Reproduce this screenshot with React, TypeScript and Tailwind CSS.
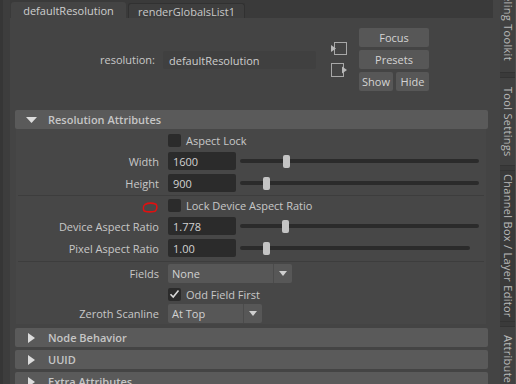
import React from "react";

const LABEL = "text-[#c8c8c8]";

function Field({ value }: { value: string }) {
  return (
    <div className="flex h-[18px] w-[68px] items-center rounded-[2px] bg-[#2b2b2b] pl-[5px] text-[#d2d2d2]">
      {value}
    </div>
  );
}

function Slider({ handle, right }: { handle: number; right: number }) {
  return (
    <div className="relative ml-[4px] flex h-[13px] flex-1 items-center" style={{ marginRight: right }}>
      <div className="h-[4px] w-full rounded-full bg-[#2b2b2b]" />
      <div className="absolute top-0 h-[13px] w-[7px] rounded-[2px] bg-[#c4c4c4]" style={{ left: handle }} />
    </div>
  );
}

function Checkbox({ checked }: { checked?: boolean }) {
  return (
    <div className="flex h-[13px] w-[13px] items-center justify-center rounded-[2px] bg-[#2b2b2b]">
      {checked ? (
        <svg width="11" height="10" viewBox="0 0 11 10">
          <path d="M1.5 5.2 L4.2 8 L9.5 1.5" fill="none" stroke="#d8d8d8" strokeWidth="1.6" />
        </svg>
      ) : null}
    </div>
  );
}

function Dropdown({ value, width }: { value: string; width: number }) {
  return (
    <div className="flex h-[19px] rounded-[2px] bg-[#575757]" style={{ width }}>
      <div className="flex flex-1 items-center pl-[4px] text-[#d2d2d2]">{value}</div>
      <div className="flex w-[19px] items-center justify-center border-l border-[#4b4b4b]">
        <svg width="8" height="5" viewBox="0 0 8 5">
          <path d="M0 0 H8 L4 5 Z" fill="#cfcfcf" />
        </svg>
      </div>
    </div>
  );
}

function Row({ label, h, children }: { label?: React.ReactNode; h: number; children: React.ReactNode }) {
  return (
    <div className="flex items-center" style={{ height: h }}>
      <div className={`flex w-[143px] shrink-0 items-center justify-end ${LABEL}`}>{label}</div>
      <div className="ml-[9px] flex flex-1 items-center">{children}</div>
    </div>
  );
}

function Header({ title, open }: { title: string; open?: boolean }) {
  return (
    <div className="flex h-[19px] shrink-0 items-center rounded-[2px] bg-[#5a5a5a]">
      <div className="flex w-[33px] justify-center">
        {open ? (
          <svg width="11" height="6" viewBox="0 0 11 6">
            <path d="M0 0 H11 L5.5 6 Z" fill="#dcdcdc" />
          </svg>
        ) : (
          <svg width="7" height="10" viewBox="0 0 7 10">
            <path d="M0 0 L7 5 L0 10 Z" fill="#dcdcdc" />
          </svg>
        )}
      </div>
      <span className="font-semibold text-[#c6c6c6]">{title}</span>
    </div>
  );
}

function Btn({ label, w }: { label: string; w: number }) {
  return (
    <div className="flex h-[19px] items-center justify-center rounded-[2px] bg-[#575757] text-[#d4d4d4]" style={{ width: w }}>
      {label}
    </div>
  );
}

function VTab({ h, text, align, dark }: { h: number; text: string; align: string; dark?: boolean }) {
  return (
    <div
      className={`flex shrink-0 overflow-hidden border-y border-[#333] ${align} ${dark ? "bg-[#3a3a3a]" : "bg-[#414141]"}`}
      style={{ height: h }}
    >
      <span className="whitespace-nowrap pl-[1px] text-[11px] leading-[15px] tracking-[0.3px] text-[#b8b8b8] [writing-mode:vertical-rl]">
        {text}
      </span>
    </div>
  );
}

export default function App() {
  return (
    <div className="flex h-[384px] w-[516px] overflow-hidden bg-[#444444] font-['Open_Sans','Noto_Sans',sans-serif] text-[11px] leading-none">
      <div className="w-[10px] shrink-0 border-l-[3px] border-[#363636] bg-[#3d3d3d]" />

      <div className="flex w-[483px] shrink-0 flex-col">
        <div className="flex h-[18px] shrink-0 items-end bg-[#3a3a3a] pl-[1px]">
          <div className="flex h-[16px] w-[115px] items-center justify-center rounded-t-[3px] bg-[#444444] text-[#cfcfcf]">
            defaultResolution
          </div>
          <div className="ml-[2px] flex h-[15px] w-[117px] items-center justify-center rounded-t-[3px] border border-b-0 border-[#313131] bg-[#3e3e3e] text-[#c8c8c8]">
            renderGlobalsList1
          </div>
        </div>

        <div className="flex flex-1 flex-col px-[5px]">
          <div className="-ml-[5px] flex items-center pb-[19px] pt-[10px]">
            <div className={`w-[145px] text-right ${LABEL}`}>resolution:</div>
            <div className="ml-[8px] mt-[1px] flex h-[18px] w-[153px] items-center rounded-[2px] bg-[#404040] pl-[6px] text-[#cdcdcd]">
              defaultResolution
            </div>
            <div className="ml-[15px] flex w-[16px] flex-col gap-[8px]">
              <svg width="16" height="13" viewBox="0 0 16 13">
                <rect x="3.5" y="0.5" width="12" height="12" fill="none" stroke="#a8a8a8" />
                <path d="M0 3 L5 6.5 L0 10 Z" fill="#b8b8b8" />
              </svg>
              <svg width="16" height="14" viewBox="0 0 16 14">
                <rect x="0.5" y="0.5" width="12" height="13" fill="none" stroke="#a8a8a8" />
                <path d="M11 3.5 L16 7 L11 10.5 Z" fill="#b8b8b8" />
              </svg>
            </div>
            <div className="ml-[12px] flex w-[70px] flex-col gap-[3px]">
              <Btn label="Focus" w={70} />
              <Btn label="Presets" w={70} />
              <div className="flex gap-[3px]">
                <Btn label="Show" w={34} />
                <Btn label="Hide" w={33} />
              </div>
            </div>
          </div>

          <Header title="Resolution Attributes" open />
          <div className="ml-[1px] mr-[2px] flex shrink-0 flex-col bg-[#474747] pb-[1px] pt-[1px]">
            <Row h={20}>
              <Checkbox />
              <span className={`ml-[5px] ${LABEL}`}>Aspect Lock</span>
            </Row>
            <Row h={22} label="Width">
              <Field value="1600" />
              <Slider handle={43} right={7} />
            </Row>
            <Row h={22} label="Height">
              <Field value="900" />
              <Slider handle={23} right={7} />
            </Row>
            <div className="mx-[2px] mt-[1px] h-px bg-[#3d3d3d]" />
            <Row
              h={19}
              label={
                <svg width="16" height="11" viewBox="0 0 16 11" className="mr-[1px] mt-[3px]">
                  <path
                    d="M3 2.5 C6 1 11 1 14 2.2 C15.5 4 15 8 13 9.2 C9 10.2 5 10 2.2 9 C1 7 1.2 4 3 2.5 Z"
                    fill="none"
                    stroke="#e01010"
                    strokeWidth="1.6"
                  />
                </svg>
              }
            >
              <Checkbox />
              <span className={`ml-[5px] ${LABEL}`}>Lock Device Aspect Ratio</span>
            </Row>
            <Row h={22} label="Device Aspect Ratio">
              <Field value="1.778" />
              <Slider handle={42} right={7} />
            </Row>
            <Row h={22} label="Pixel Aspect Ratio">
              <Field value="1.00" />
              <Slider handle={23} right={16} />
            </Row>
            <div className="mx-[2px] mt-[2px] h-px bg-[#3d3d3d]" />
            <Row h={22} label="Fields">
              <Dropdown value="None" width={124} />
            </Row>
            <Row h={20}>
              <Checkbox checked />
              <span className={`ml-[5px] ${LABEL}`}>Odd Field First</span>
            </Row>
            <Row h={19} label="Zeroth Scanline">
              <Dropdown value="At Top" width={94} />
            </Row>
          </div>
          <div className="mt-[4px] flex flex-col gap-[3px]">
            <Header title="Node Behavior" />
            <Header title="UUID" />
            <Header title="Extra Attributes" />
          </div>
        </div>
      </div>

      <div className="w-[7px] shrink-0 bg-[#444444]" />

      <div className="flex w-[16px] shrink-0 flex-col gap-[4px] border-r border-[#4e4e4e] bg-[#3a3a3a]">
        <div className="-mt-[40px]">
          <VTab h={113} text="Modeling Toolkit" align="items-end justify-center pb-[11px]" />
        </div>
        <VTab h={89} text="Tool Settings" align="items-center justify-center" />
        <VTab h={152} text="Channel Box / Layer Editor" align="items-center justify-center" dark />
        <VTab h={80} text="Attribute Editor" align="items-start justify-center pt-[8px]" />
      </div>
    </div>
  );
}
